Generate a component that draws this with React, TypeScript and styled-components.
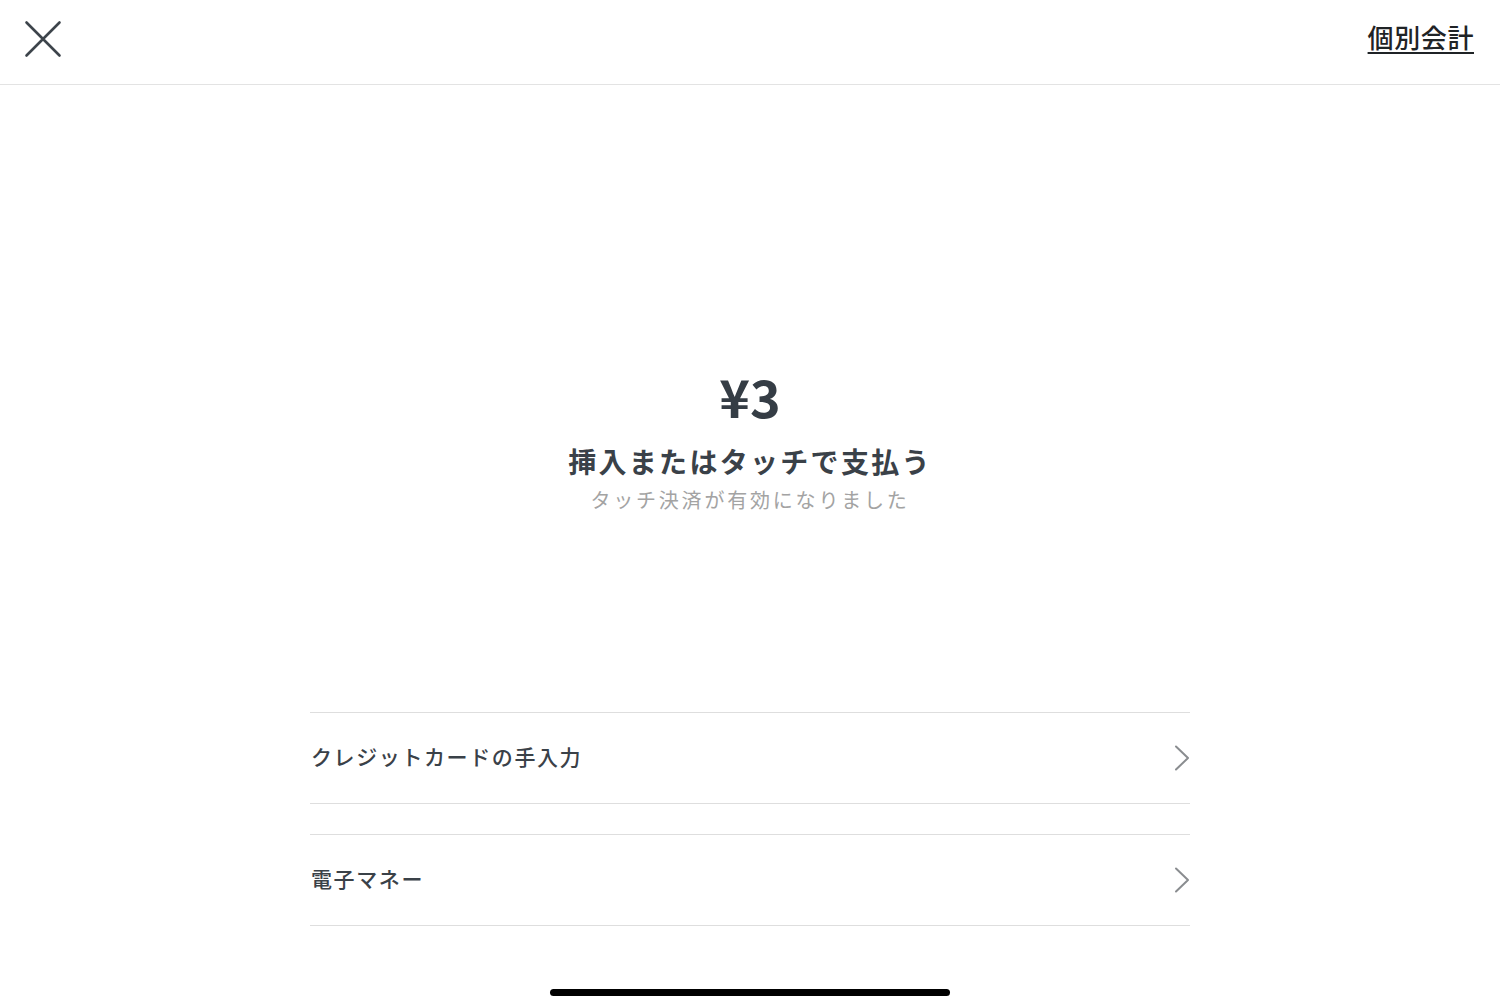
import React from "react";
import styled, { createGlobalStyle } from "styled-components";

const GlobalStyle = createGlobalStyle`
  html, body {
    margin: 0;
    padding: 0;
    background: #ffffff;
  }
  body {
    font-family: "Noto Sans CJK JP", "Noto Sans", sans-serif;
    color: #3a4148;
  }
`;

const Page = styled.div`
  height: 100vh;
  display: flex;
  flex-direction: column;
  overflow: hidden;
`;

const Header = styled.header`
  height: 84px;
  flex-shrink: 0;
  display: flex;
  align-items: center;
  justify-content: space-between;
  padding: 0 26px 0 24px;
  border-bottom: 1px solid #e3e3e3;
`;

const CloseButton = styled.button`
  width: 38px;
  height: 38px;
  padding: 0;
  border: 0;
  background: none;
  display: flex;
  align-items: center;
  justify-content: center;
  margin-top: -6px;
  cursor: pointer;
`;

const SplitLink = styled.a`
  font-size: 26px;
  font-weight: 500;
  letter-spacing: 0.6px;
  line-height: 1;
  color: #1f2326;
  text-decoration: underline;
  text-decoration-thickness: 2px;
  text-underline-offset: 4px;
  margin-top: -10px;
  cursor: pointer;
`;

const Main = styled.main`
  flex: 1;
  display: flex;
  flex-direction: column;
  align-items: center;
  padding-top: 285px;
`;

const Amount = styled.div`
  font-size: 52px;
  font-weight: 700;
  line-height: 1;
  color: #353d45;
`;

const Title = styled.div`
  margin-top: 25px;
  font-size: 28px;
  font-weight: 700;
  letter-spacing: 2.3px;
  line-height: 1;
  color: #3a4148;
`;

const Subtitle = styled.div`
  margin-top: 15px;
  font-size: 20px;
  letter-spacing: 2.8px;
  line-height: 1;
  color: #a3a3a3;
`;

const OptionList = styled.div`
  margin-top: 202px;
  width: 880px;
  display: flex;
  flex-direction: column;
  gap: 30px;
`;

const OptionRow = styled.button`
  height: 92px;
  width: 100%;
  padding: 0 0 0 1px;
  border: 0;
  border-top: 1px solid #dedede;
  border-bottom: 1px solid #dedede;
  background: none;
  display: flex;
  align-items: center;
  justify-content: space-between;
  font-family: inherit;
  font-size: 21px;
  font-weight: 500;
  letter-spacing: 1.6px;
  color: #3a4148;
  cursor: pointer;
`;

const OptionLabel = styled.span`
  margin-top: -4px;
`;

const HomeIndicator = styled.div`
  position: absolute;
  left: 50%;
  bottom: 10px;
  width: 400px;
  height: 7px;
  margin-left: -200px;
  border-radius: 4px;
  background: #000000;
`;

const Chevron = () => (
  <svg width="16" height="26" viewBox="0 0 16 26" fill="none">
    <path
      d="M2 1.5 L14 13 L2 24.5"
      stroke="#8a8d90"
      strokeWidth="2"
      strokeLinecap="round"
      strokeLinejoin="round"
    />
  </svg>
);

const options = ["クレジットカードの手入力", "電子マネー"];

const App: React.FC = () => {
  return (
    <>
      <GlobalStyle />
      <Page>
        <Header>
          <CloseButton aria-label="閉じる">
            <svg width="38" height="38" viewBox="0 0 38 38" fill="none">
              <path
                d="M2.5 2.5 L35.5 35.5 M35.5 2.5 L2.5 35.5"
                stroke="#3d444b"
                strokeWidth="2.6"
                strokeLinecap="round"
              />
            </svg>
          </CloseButton>
          <SplitLink>個別会計</SplitLink>
        </Header>
        <Main>
          <Amount>¥3</Amount>
          <Title>挿入またはタッチで支払う</Title>
          <Subtitle>タッチ決済が有効になりました</Subtitle>
          <OptionList>
            {options.map((label) => (
              <OptionRow key={label}>
                <OptionLabel>{label}</OptionLabel>
                <Chevron />
              </OptionRow>
            ))}
          </OptionList>
        </Main>
        <HomeIndicator />
      </Page>
    </>
  );
};

export default App;
